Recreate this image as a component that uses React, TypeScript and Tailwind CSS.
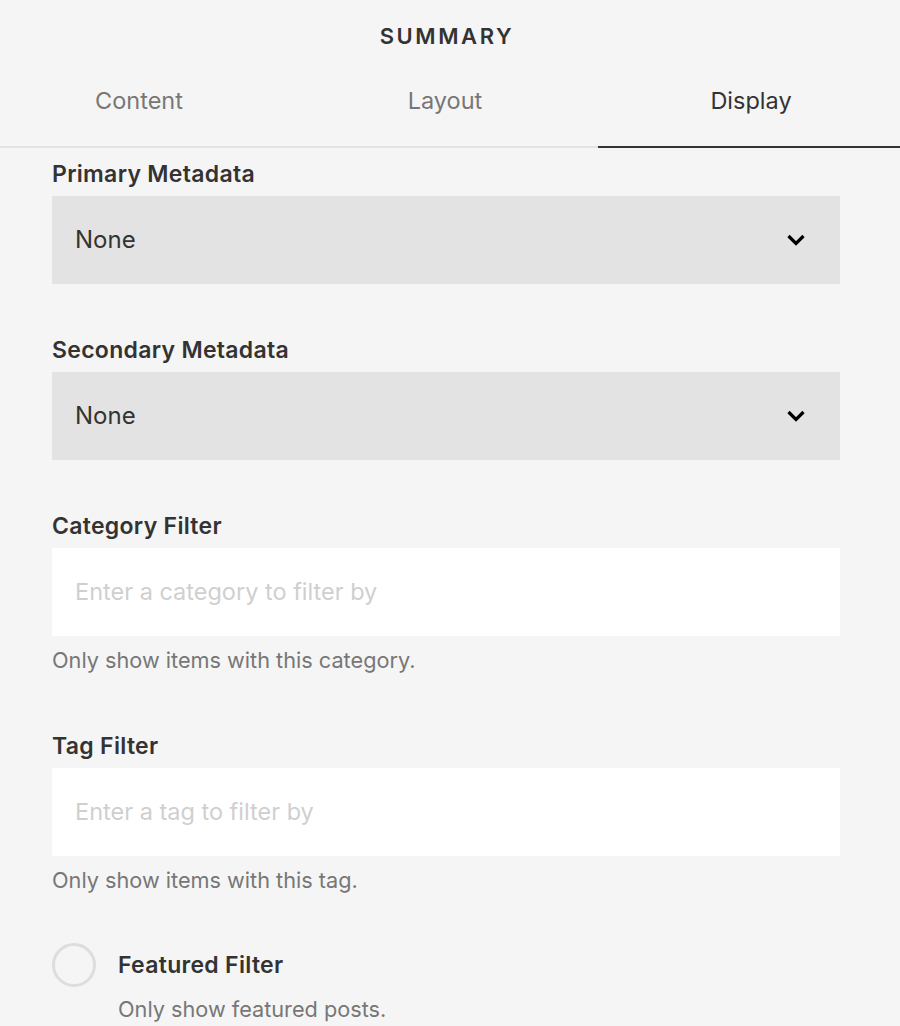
import React from "react";

function Chevron() {
  return (
    <svg width="20" height="14" viewBox="0 0 20 14" className="shrink-0">
      <polyline points="2.5,3 10,10.5 17.5,3" fill="none" stroke="#000" strokeWidth="3.2" strokeLinecap="butt" strokeLinejoin="miter" />
    </svg>
  );
}

function Label({ children }: { children: React.ReactNode }) {
  return <div className="text-[23px] leading-[28px] font-semibold tracking-[0.3px] text-[#333]">{children}</div>;
}

function SelectField({ label }: { label: string }) {
  return (
    <div className="flex flex-col">
      <Label>{label}</Label>
      <div className="mt-[8px] h-[88px] bg-[#e3e3e3] flex items-center justify-between pl-[23px] pr-[34px]">
        <span className="text-[24px] text-[#333]">None</span>
        <Chevron />
      </div>
    </div>
  );
}

function TextField({ label, placeholder, help }: { label: string; placeholder: string; help: string }) {
  return (
    <div className="flex flex-col">
      <Label>{label}</Label>
      <div className="mt-[8px] h-[88px] bg-white flex items-center pl-[23px]">
        <span className="text-[23.5px] text-[#cfcfcf]">{placeholder}</span>
      </div>
      <div className="mt-[10px] text-[21.7px] leading-[28px] text-[#777]">{help}</div>
    </div>
  );
}

export default function App() {
  return (
    <div className="w-[900px] h-[1026px] overflow-hidden bg-[#f5f5f5]" style={{ fontFamily: "Inter, 'Liberation Sans', sans-serif" }}>
      <div className="h-[72px] flex items-center justify-center">
        <span className="text-[22px] font-semibold tracking-[2.6px] text-[#333] pr-[6px]">SUMMARY</span>
      </div>
      <div className="flex h-[76px]">
        <div className="w-[598px] flex border-b-2 border-[#e3e3e3] pb-[16px]">
          <div className="w-[278px] flex items-center justify-center text-[23.5px] text-[#777]">Content</div>
          <div className="ml-[14px] w-[306px] flex items-center justify-center text-[23.5px] text-[#777]">Layout</div>
        </div>
        <div className="w-[302px] flex items-center justify-center border-b-2 border-[#333] pb-[16px] text-[23.5px] text-[#333] pl-[4px]">Display</div>
      </div>
      <div className="px-[52px] pr-[60px] pt-[12px] flex flex-col">
        <SelectField label="Primary Metadata" />
        <div className="mt-[52px]">
          <SelectField label="Secondary Metadata" />
        </div>
        <div className="mt-[52px]">
          <TextField label="Category Filter" placeholder="Enter a category to filter by" help="Only show items with this category." />
        </div>
        <div className="mt-[58px]">
          <TextField label="Tag Filter" placeholder="Enter a tag to filter by" help="Only show items with this tag." />
        </div>
        <div className="mt-[49px] flex items-start gap-[22px]">
          <div className="w-[44px] h-[44px] rounded-full border-[3px] border-[#dddddd] shrink-0" />
          <div className="flex flex-col pt-[8px]">
            <Label>Featured Filter</Label>
            <div className="mt-[16px] text-[21.7px] leading-[28px] text-[#777]">Only show featured posts.</div>
          </div>
        </div>
      </div>
    </div>
  );
}
